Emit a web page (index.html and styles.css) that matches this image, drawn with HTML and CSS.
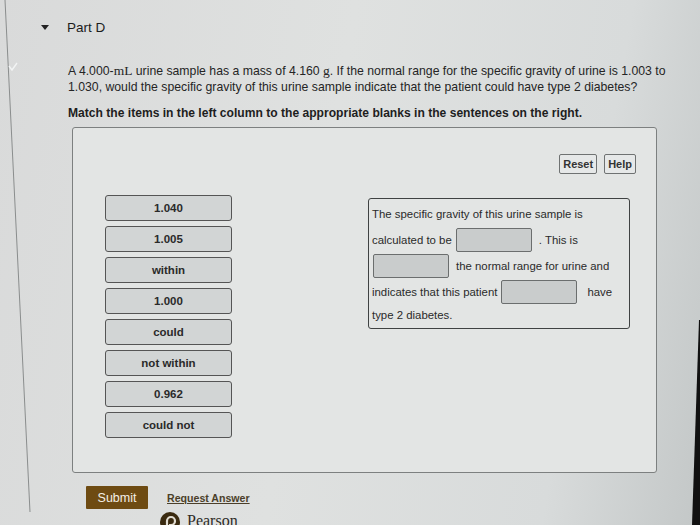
FILE: index.html
```html
<!DOCTYPE html>
<html lang="en">
<head>
<meta charset="utf-8">
<title>Part D</title>
<link rel="stylesheet" href="styles.css">
</head>
<body>
<div class="screen">
  <svg class="edge" width="700" height="525" viewBox="0 0 700 525" aria-hidden="true">
    <line x1="5" y1="0" x2="30" y2="512" stroke="#8a8d8d" stroke-width="1"/>
    <polyline points="9,66 12,70 17,63" fill="none" stroke="#f2f4f4" stroke-width="1.4"/>
    <polygon points="699,320 700,320 700,525 692,525" fill="#111"/>
  </svg>

  <header class="part-head">
    <span class="caret"></span>
    <span class="part-title">Part D</span>
  </header>

  <section class="question">
    <p class="prompt">A 4.000-<span class="math">mL</span> urine sample has a mass of 4.160 <span class="math">g</span>. If the normal range for the specific gravity of urine is 1.003 to<br>1.030, would the specific gravity of this urine sample indicate that the patient could have type 2 diabetes?</p>
    <p class="instr">Match the items in the left column to the appropriate blanks in the sentences on the right.</p>
  </section>

  <section class="panel">
    <div class="toolbar">
      <button class="tool-btn">Reset</button>
      <button class="tool-btn">Help</button>
    </div>
    <div class="work">
      <ul class="items">
        <li class="item">1.040</li>
        <li class="item">1.005</li>
        <li class="item">within</li>
        <li class="item">1.000</li>
        <li class="item">could</li>
        <li class="item">not within</li>
        <li class="item">0.962</li>
        <li class="item">could not</li>
      </ul>
      <div class="sentence">
        <div class="row">The specific gravity of this urine sample is</div>
        <div class="row"><span>calculated to be</span><span class="blank"></span><span class="after">. This is</span></div>
        <div class="row"><span class="blank"></span><span class="mid">the normal range for urine and</span></div>
        <div class="row"><span>indicates that this patient</span><span class="blank"></span><span class="have">have</span></div>
        <div class="row last">type 2 diabetes.</div>
      </div>
    </div>
  </section>

  <footer class="actions">
    <button class="submit">Submit</button>
    <a class="request" href="#">Request Answer</a>
  </footer>
  <div class="brand">
    <svg class="logo" width="20" height="20" viewBox="0 0 20 20" aria-hidden="true">
      <circle cx="10" cy="10" r="10" fill="#3a2a10"/>
      <path d="M7 16 V9 a4 4 0 1 1 4 4 H9" fill="none" stroke="#e2ddd2" stroke-width="2.2"/>
    </svg>
    <span class="brand-name">Pearson</span>
  </div>
</div>
</body>
</html>
```

FILE: styles.css
```css
* { box-sizing: border-box; }
html, body { margin: 0; padding: 0; }
body {
  width: 700px;
  height: 525px;
  overflow: hidden;
  font-family: "Liberation Sans", Arial, sans-serif;
  color: #222;
  background: linear-gradient(100deg, #d9dada 0%, #dfe1e0 45%, #d8dbdb 80%, #c3c7c7 100%);
}
.screen {
  position: relative;
  width: 700px;
  height: 525px;
  padding: 18px 0 0 41px;
}
.edge { position: absolute; left: 0; top: 0; pointer-events: none; }

.part-head {
  display: flex;
  align-items: center;
  height: 18px;
}
.caret {
  width: 0; height: 0;
  border-left: 4.5px solid transparent;
  border-right: 4.5px solid transparent;
  border-top: 5px solid #222;
  margin-right: 18px;
}
.part-title { font-size: 13.5px; color: #1c1c1c; }

.question { margin: 27px 0 0 27px; }
.prompt {
  margin: 0;
  font-size: 12.25px;
  line-height: 16px;
  color: #252525;
}
.math { font-family: "Liberation Serif", "Times New Roman", serif; font-size: 13.5px; }
.instr {
  margin: 11px 0 0;
  font-size: 12.1px;
  font-weight: bold;
  line-height: 14px;
  color: #1e1e1e;
}

.panel {
  margin: 7px 0 0 31px;
  width: 585px;
  height: 346px;
  border: 1px solid #7d8080;
  border-radius: 3px;
  background: #e3e5e4;
  padding: 26px 20px 0 32px;
}
.toolbar {
  display: flex;
  justify-content: flex-end;
  gap: 7px;
  height: 20px;
}
.tool-btn {
  font-family: inherit;
  font-size: 11px;
  font-weight: bold;
  color: #333;
  background: #e6e8e8;
  border: 1px solid #6f7272;
  border-radius: 2px;
  padding: 0 3px;
  height: 20px;
}
.work {
  display: flex;
  align-items: flex-start;
  margin-top: 21px;
}
.items {
  list-style: none;
  margin: 0;
  padding: 0;
  display: flex;
  flex-direction: column;
  gap: 5px;
}
.item {
  width: 127px;
  height: 26px;
  border: 1.5px solid #555;
  border-radius: 3px;
  background: #d2d5d5;
  display: flex;
  align-items: center;
  justify-content: center;
  font-size: 11.5px;
  font-weight: bold;
  color: #2a2a2a;
}
.sentence {
  margin: 3px 0 0 136px;
  width: 262px;
  height: 131px;
  border: 1.5px solid #3f4242;
  border-radius: 3px;
  padding: 2px 16px 0 3px;
  font-size: 11.4px;
  color: #2a2a2a;
}
.row {
  display: flex;
  align-items: center;
  height: 26px;
  white-space: nowrap;
}
.row.last { height: 19px; }
.blank {
  display: inline-block;
  flex: none;
  width: 76px;
  height: 24px;
  border: 1px solid #6b6e6e;
  border-radius: 2px;
  background: #c9cccc;
  margin: 0 4px;
}
.row .blank:first-child { margin-left: 1px; margin-right: 7px; }
.after { margin-left: 3px; }
.have { margin-left: 6px; }

.actions {
  display: flex;
  align-items: center;
  margin: 13px 0 0 45px;
}
.submit {
  width: 62px;
  height: 23px;
  border: none;
  border-radius: 1px;
  background: #6e4b12;
  color: #f3efe6;
  font-family: inherit;
  font-size: 12.5px;
  padding: 0;
}
.request {
  margin-left: 19px;
  font-size: 10.6px;
  font-weight: bold;
  color: #4b3f2a;
  text-decoration: underline;
}
.brand {
  display: flex;
  align-items: flex-start;
  margin: 3px 0 0 119px;
}
.logo { flex: none; margin-right: 7px; }
.brand-name {
  font-family: "Liberation Serif", "Times New Roman", serif;
  font-size: 16px;
  color: #2d2a26;
  line-height: 18px;
}
```
